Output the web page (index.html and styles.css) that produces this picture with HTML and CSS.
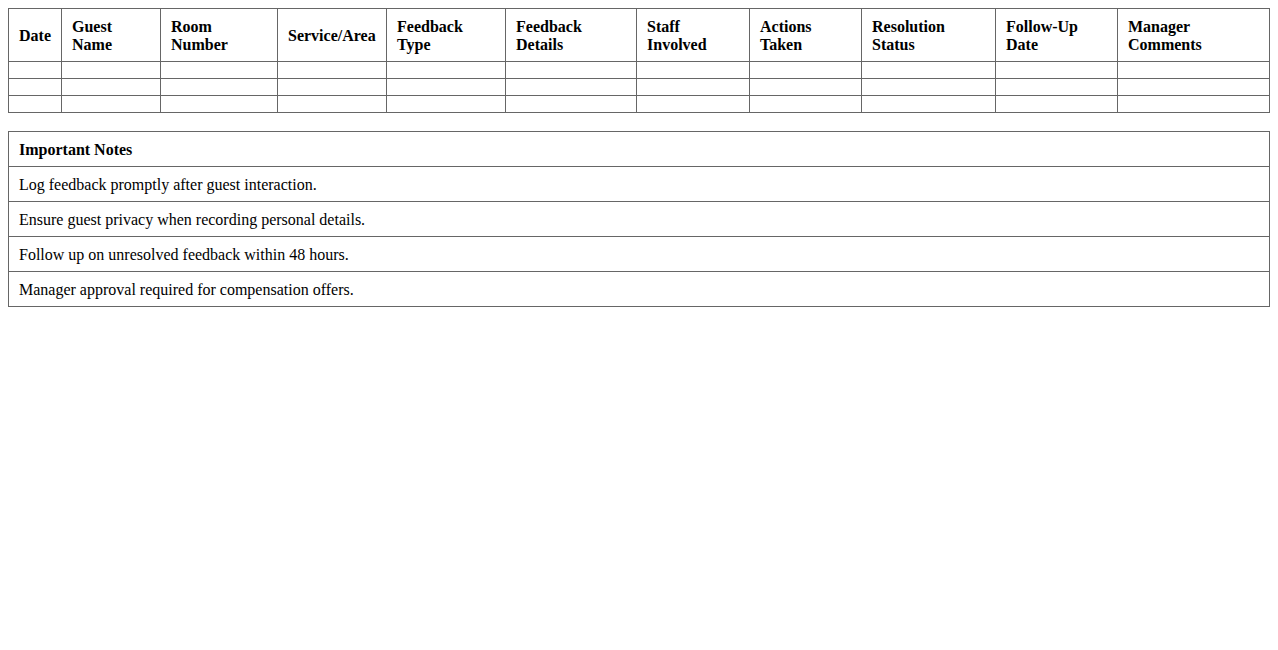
FILE: index.html
```html
<!DOCTYPE html>
<html lang="en">
<head>
<meta charset="utf-8">
<title>Guest Feedback Log</title>
<link rel="stylesheet" href="styles.css">
</head>
<body>
<table class="log">
  <thead>
    <tr>
      <th class="c-date">Date</th>
      <th class="c-guest">Guest Name</th>
      <th class="c-room">Room Number</th>
      <th class="c-service">Service/Area</th>
      <th class="c-type">Feedback Type</th>
      <th class="c-details">Feedback Details</th>
      <th class="c-staff">Staff Involved</th>
      <th class="c-actions">Actions Taken</th>
      <th class="c-status">Resolution Status</th>
      <th class="c-follow">Follow-Up Date</th>
      <th class="c-manager">Manager Comments</th>
    </tr>
  </thead>
  <tbody>
    <tr><td></td><td></td><td></td><td></td><td></td><td></td><td></td><td></td><td></td><td></td><td></td></tr>
    <tr><td></td><td></td><td></td><td></td><td></td><td></td><td></td><td></td><td></td><td></td><td></td></tr>
    <tr><td></td><td></td><td></td><td></td><td></td><td></td><td></td><td></td><td></td><td></td><td></td></tr>
  </tbody>
</table>

<table class="notes">
  <thead>
    <tr><th>Important Notes</th></tr>
  </thead>
  <tbody>
    <tr><td>Log feedback promptly after guest interaction.</td></tr>
    <tr><td>Ensure guest privacy when recording personal details.</td></tr>
    <tr><td>Follow up on unresolved feedback within 48 hours.</td></tr>
    <tr><td>Manager approval required for compensation offers.</td></tr>
  </tbody>
</table>
</body>
</html>
```

FILE: styles.css
```css
html, body {
  background: #fff;
}

body {
  margin: 8px;
  font-family: "Liberation Serif", "Times New Roman", serif;
  font-size: 16px;
  line-height: 18px;
  color: #000;
}

table {
  width: 100%;
  border-collapse: collapse;
  table-layout: fixed;
}

th, td {
  box-sizing: border-box;
  border: 1px solid #666;
  padding: 9px 10px 7px;
  text-align: left;
  vertical-align: middle;
}

th {
  font-weight: bold;
}

.log .c-date { width: 53px; }
.log .c-guest { width: 99px; }
.log .c-room { width: 117px; }
.log .c-service { width: 109px; }
.log .c-type { width: 119px; }
.log .c-details { width: 131px; }
.log .c-staff { width: 113px; }
.log .c-actions { width: 112px; }
.log .c-status { width: 134px; }
.log .c-follow { width: 122px; }
.log .c-manager { width: auto; }

.notes {
  margin-top: 18px;
}

.notes td {
  font-weight: normal;
}
```
